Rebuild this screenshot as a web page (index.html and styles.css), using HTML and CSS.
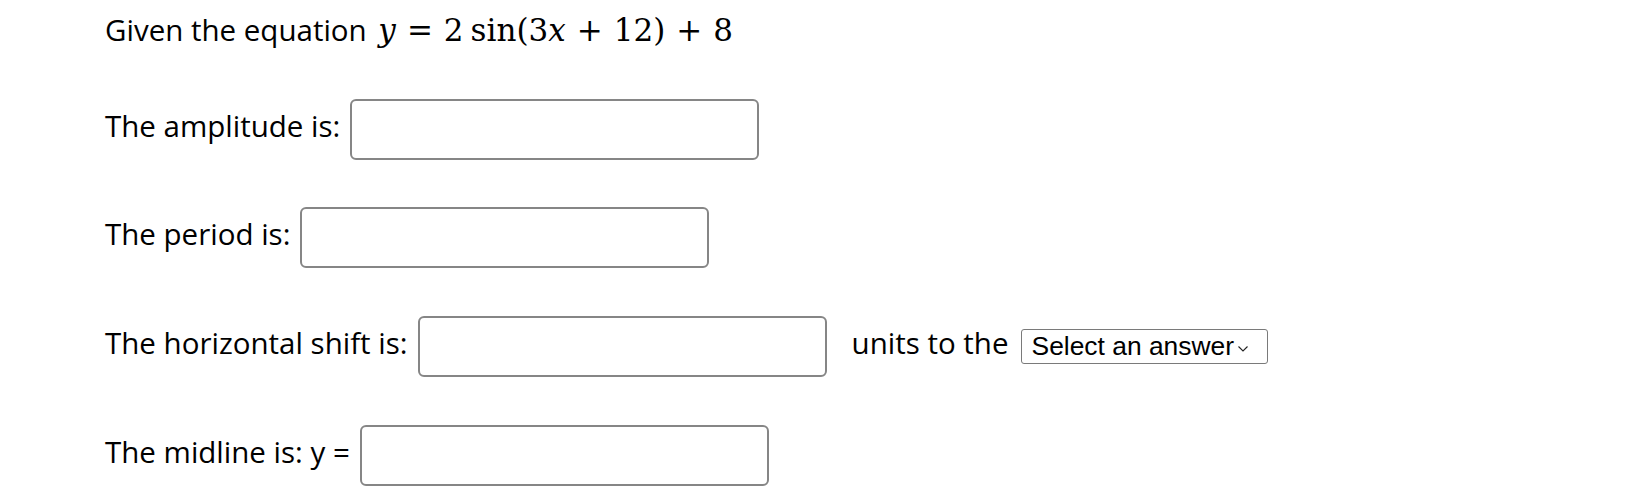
FILE: index.html
```html
<!DOCTYPE html>
<html lang="en">
<head>
<meta charset="utf-8">
<title>Sinusoid question</title>
<link rel="stylesheet" href="styles.css">
</head>
<body>
<div class="question">
  <p class="prompt">Given the equation <span class="math"><span class="mi">y</span><span class="rel">=</span><span class="mn">2</span><span class="fn">sin</span><span class="paren">(</span><span class="mn">3</span><span class="mi">x</span><span class="bin">+</span><span class="mn">12</span><span class="paren">)</span><span class="bin">+</span><span class="mn">8</span></span></p>

  <div class="row">
    <label class="label" for="amp">The amplitude is:</label>
    <input class="answer" id="amp" type="text">
  </div>

  <div class="row">
    <label class="label" for="per">The period is:</label>
    <input class="answer" id="per" type="text">
  </div>

  <div class="row">
    <label class="label" for="hs">The horizontal shift is:</label>
    <input class="answer" id="hs" type="text">
    <span class="label suffix">units to the</span>
    <span class="select-wrap">
      <select class="choice">
        <option>Select an answer</option>
        <option>left</option>
        <option>right</option>
      </select>
      <svg class="chev" width="10" height="6" viewBox="0 0 10 6"><path d="M0.5 0.5 L5 5 L9.5 0.5" fill="none" stroke="#222" stroke-width="1.1"/></svg>
    </span>
  </div>

  <div class="row">
    <label class="label" for="mid">The midline is: y =</label>
    <input class="answer" id="mid" type="text">
  </div>
</div>
</body>
</html>
```

FILE: styles.css
```css
html, body {
  margin: 0;
  padding: 0;
  background: #ffffff;
}

body {
  font-family: "Open Sans", "Noto Sans", sans-serif;
  font-size: 29.5px;
  color: #000;
}

.question {
  padding: 11px 0 0 105px;
}

.prompt {
  margin: 0;
  height: 37px;
  line-height: 37px;
  white-space: nowrap;
}

.math {
  font-family: "DejaVu Serif", "Liberation Serif", serif;
  font-size: 31px;
  line-height: 1;
  margin-left: 4px;
}

.mi {
  font-style: italic;
}

.rel {
  margin: 0 11px;
}

.bin {
  margin: 0 11px;
}

.fn {
  margin-left: 7px;
}

.row {
  display: flex;
  align-items: center;
  height: 61px;
  margin-top: 47.7px;
}

.row:first-of-type {
  margin-top: 50.5px;
}

.label {
  padding-bottom: 8px;
  white-space: nowrap;
}

.answer {
  box-sizing: border-box;
  width: 409px;
  height: 61px;
  margin: 0 0 0 10px;
  border: 2px solid #868686;
  border-radius: 6px;
  background: #fff;
  font: inherit;
  padding: 0 10px;
}

.suffix {
  margin-left: 25px;
}

.select-wrap {
  position: relative;
  display: inline-flex;
  margin-left: 12px;
}

.choice {
  -webkit-appearance: none;
  appearance: none;
  box-sizing: border-box;
  width: 247px;
  height: 35px;
  margin: 0;
  padding: 0 0 0 10px;
  border: 1px solid #7a7a7a;
  border-radius: 3px;
  background: #fff;
  color: #000;
  font-family: "Liberation Sans", Arial, sans-serif;
  font-size: 26.4px;
}

.chev {
  position: absolute;
  right: 20px;
  top: 17px;
  pointer-events: none;
}
```
